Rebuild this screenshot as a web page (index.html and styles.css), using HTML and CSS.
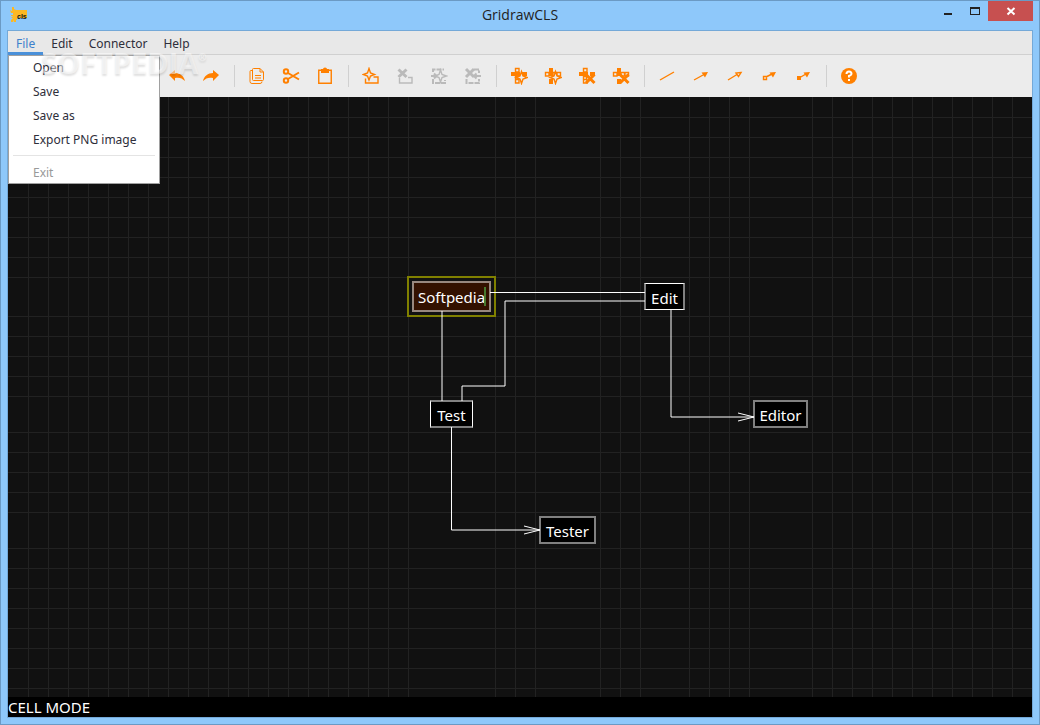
FILE: index.html
```html
<!DOCTYPE html>
<html lang="en">
<head>
<meta charset="utf-8">
<title>GridrawCLS</title>
<link rel="stylesheet" href="styles.css">
</head>
<body>
<div class="window">
  <header class="titlebar">
    <svg class="logo" width="22" height="18" viewBox="0 0 22 18" aria-hidden="true">
      <path fill="#fcb823" d="M2 1h2v2l2 1h11v8H7v2H6v2H4v-2l-1 2H1v-2l2-2H1l2-2H1V9h2V7H1L0 4l2 1z"/>
      <text class="logo-text" x="7" y="13">cls</text>
    </svg>
    <h1 class="title">GridrawCLS</h1>
    <div class="controls">
      <button class="control" aria-label="Minimize"><svg width="12" height="12"><path d="M2 8h8v2H2z" fill="#222"/></svg></button>
      <button class="control" aria-label="Maximize"><svg width="12" height="12"><path fill-rule="evenodd" d="M1 2h10v8H1zM2 4v5h8V4z" fill="#222"/></svg></button>
      <button class="control close" aria-label="Close"><svg width="10" height="10"><path d="M1.500 2l7 6.500M8.500 2l-7 6.500" stroke="#fff" stroke-width="2"/></svg></button>
    </div>
  </header>

  <main class="content">
    <nav class="menubar">
      <div class="menu">
        <button class="menu-title active" aria-expanded="true">File</button>
        <div class="dropdown">
          <button class="item">Open</button>
          <button class="item">Save</button>
          <button class="item">Save as</button>
          <button class="item">Export PNG image</button>
          <hr class="divider">
          <button class="item" disabled>Exit</button>
        </div>
      </div>
      <button class="menu-title">Edit</button>
      <button class="menu-title">Connector</button>
      <button class="menu-title">Help</button>
      <span class="watermark">SOFTPEDIA<span class="mark">®</span></span>
    </nav>

    <div class="toolbar">
      <button class="tool" aria-label="Undo"><svg viewBox="0 0 18 18"><path class="fill" d="M1 8l6-5v3c5 0 9 3 10 8-3-3-6-4-10-3v3z"/></svg></button>
      <button class="tool" aria-label="Redo"><svg viewBox="0 0 18 18"><path class="fill" d="M17 8l-6-5v3C6 6 2 9 1 14c3-3 6-4 10-3v3z"/></svg></button>
      <span class="sep"></span>
      <button class="tool" aria-label="Copy"><svg viewBox="0 0 18 18"><path class="line" d="M6 1.500h6l3.500 3.500v7.500q0 1-1 1h-9q-1 0-1-1v-10q0-1 1-1zM12 1.500V5h3.500M4 3.500H3q-1 0-1 1v10q0 2 2 2h8q2 0 2-2M7 8.500h6M7 11h6"/></svg></button>
      <button class="tool" aria-label="Cut"><svg viewBox="0 0 18 18"><path class="line bold" d="M6 6l11 6.500M6 12l11-6.500"/><circle class="line bold" cx="4" cy="4.500" r="2.200"/><circle class="line bold" cx="4" cy="13.500" r="2.200"/></svg></button>
      <button class="tool" aria-label="Paste"><svg viewBox="0 0 18 18"><path class="line thick" d="M2.750 3.250h12.500v13H2.750z"/><path class="fill" d="M5 2h2q0-1.500 2-1.500T11 2h2v4H5z"/></svg></button>
      <span class="sep"></span>
      <button class="tool" aria-label="Add cell"><svg viewBox="0 0 18 18"><path class="line thick" d="M7 1.500L8.500 6l4 1.500-4 1.500L7 13 5.500 9l-4-1.500 4-1.500z"/><path class="line thick" d="M3.500 11.500v4.500h12.500v-6H11.500"/></svg></button>
      <button class="tool" aria-label="Delete cell" disabled><svg viewBox="0 0 18 18"><path class="line heavy" d="M2.500 2.500l8 7.500M10.500 2.500l-8 7.500"/><path class="line thick" d="M3.500 11v5h12.500v-5.500H12"/></svg></button>
      <button class="tool" aria-label="Add connector" disabled><svg viewBox="0 0 18 18"><path class="line bold dash" d="M3 5V2.500h11M3 12v4h12v-3"/><path class="line bold" d="M1 9h5M4 6.500L6.500 9 4 11.500"/><path class="line thick" d="M10.500 3l1.500 4.500L16.500 9 12 10.500 10.500 15 9 10.500 5 9 9 7.500z"/></svg></button>
      <button class="tool" aria-label="Delete connector" disabled><svg viewBox="0 0 18 18"><path class="line heavy" d="M2 2l8 8M10 2L2 10"/><path class="line bold dash" d="M10 2.500h5V6M2.500 12v4h12.500V12"/><path class="line bold" d="M10 9h7M12.500 6.500L10 9l2.500 2.500"/></svg></button>
      <span class="sep"></span>
      <button class="tool" aria-label="Insert row"><svg viewBox="0 0 18 18"><path class="fill" d="M1 5h5v4H1zM6 5h4v4H6zM12 5h5v4h-5z"/><path class="line thick" d="M5.500 1.500h3.500V5H5.500zM5.500 9.500h3.500V12H5.500zM5.500 12.500h3.500V16H5.500z"/><path class="star" d="M11.500 4.500l1.500 4.500 4.500 1.500-4.500 1.500-1.500 4.500-1.500-4.500-4-1.500 4-1.500z"/></svg></button>
      <button class="tool" aria-label="Insert column"><svg viewBox="0 0 18 18"><path class="fill" d="M5 1h4v4H5zM5 5h4v4H5zM5 12h4v5H5z"/><path class="line thick" d="M1.500 5.500h3.500V9H1.500zM9 5.500h3.500V9H9zM13 5.500h3.500V9H13z"/><path class="star" d="M11.500 4.500l1.500 4.500 4.500 1.500-4.500 1.500-1.500 4.500-1.500-4.500-4-1.500 4-1.500z"/></svg></button>
      <button class="tool" aria-label="Remove row"><svg viewBox="0 0 18 18"><path class="fill" d="M1 5h9v4H1zM12 5h5v4h-5z"/><path class="line thick" d="M5.500 1.500h3.500V5H5.500zM5.500 9.500h3v3h-3zM5.500 12.500h3.500V16H5.500z"/><path class="line heavy" d="M8 7.500l8.500 8.500M16.500 7.500L8 16"/></svg></button>
      <button class="tool" aria-label="Remove column"><svg viewBox="0 0 18 18"><path class="fill" d="M5 1h4v8H5zM5 12h4v5H5z"/><path class="line thick" d="M1.500 5.500h3.500V9H1.500zM9 5.500h3.500V9H9zM13 5.500h3.500V9H13z"/><path class="line heavy" d="M8 7.500l8.500 8.500M16.500 7.500L8 16"/></svg></button>
      <span class="sep"></span>
      <button class="tool" aria-label="Line"><svg viewBox="0 0 18 18"><path class="line thick" d="M2 13L16 5"/></svg></button>
      <button class="tool" aria-label="Arrow"><svg viewBox="0 0 18 18"><path class="line thick" d="M2 13L12 7.500"/><path class="fill" d="M16 5l-6.500 .5 3.500 5z"/></svg></button>
      <button class="tool" aria-label="Open arrow"><svg viewBox="0 0 18 18"><path class="line thick" d="M2 13l9-5.500M15 5.500l-5 .5 2.500 3.500z"/></svg></button>
      <button class="tool" aria-label="Arrow from open square"><svg viewBox="0 0 18 18"><path class="line thick" d="M3.500 9.500h3v3h-3zM6 10l6-3"/><path class="fill" d="M16 5l-6.500 .5 3.500 5z"/></svg></button>
      <button class="tool" aria-label="Arrow from filled square"><svg viewBox="0 0 18 18"><path class="line thick" d="M5 11l7-4"/><path class="fill" d="M3 9h4v4H3zM16 5l-6.500 .5 3.500 5z"/></svg></button>
      <span class="sep"></span>
      <button class="tool" aria-label="Help"><svg viewBox="0 0 18 18"><circle class="fill" cx="9" cy="9" r="8"/><path class="query" d="M6.500 7q0-2.500 2.500-2.500T11.500 7Q11.500 8 9 9v1.500M9 12v2"/></svg></button>
    </div>

    <section class="canvas">
      <svg class="drawing" width="100%" height="100%" aria-hidden="true">
        <path class="grid" d="M20.500 0v600M40.500 0v600M60.500 0v600M80.500 0v600M100.500 0v600M120.500 0v600M140.500 0v600M160.500 0v600M180.500 0v600M200.500 0v600M220.500 0v600M240.500 0v600M260.500 0v600M280.500 0v600M300.500 0v600M320.500 0v600M340.500 0v600M360.500 0v600M380.500 0v600M400.500 0v600M487.500 0v600M507.500 0v600M527.500 0v600M592.500 0v600M612.500 0v600M632.500 0v600M681.500 0v600M701.500 0v600M721.500 0v600M741.500 0v600M804.500 0v600M824.500 0v600M844.500 0v600M864.500 0v600M884.500 0v600M904.500 0v600M924.500 0v600M944.500 0v600M964.500 0v600M984.500 0v600M1004.500 0v600"/>
        <path class="grid" d="M0 20.500h1024M0 40.500h1024M0 60.500h1024M0 80.500h1024M0 100.500h1024M0 120.500h1024M0 140.500h1024M0 160.500h1024M0 180.500h1024M0 219.500h1024M0 239.500h1024M0 259.500h1024M0 279.500h1024M0 299.500h1024M0 335.500h1024M0 355.500h1024M0 375.500h1024M0 395.500h1024M0 415.500h1024M0 451.500h1024M0 471.500h1024M0 491.500h1024M0 511.500h1024M0 531.500h1024M0 551.500h1024M0 571.500h1024M0 591.500h1024"/>
      </svg>
      <div class="selection"><input class="cell-input" type="text" value="Softpedia" aria-label="Cell text"><span class="caret"></span></div>
      <div class="cell edit">Edit</div>
      <div class="cell test">Test</div>
      <div class="cell editor">Editor</div>
      <div class="cell tester">Tester</div>
      <svg class="drawing" width="100%" height="100%" aria-hidden="true">
        <path class="wire" d="M482 195.500H637M637 204H497V289H454V304M434 214V304M443.500 330V433H532M663 213V320H746"/>
        <path class="wire" d="M516 429L532 433L516 437M730 316L746 320L730 324"/>
      </svg>
    </section>
    <footer class="status">CELL MODE</footer>
  </main>
</div>
</body>
</html>
```

FILE: styles.css
```css
* { box-sizing: border-box; }
body { margin: 0; }
button { margin: 0; padding: 0; border: 0; background: none; font: inherit; color: inherit; }

.window {
  display: flex;
  flex-direction: column;
  min-height: 100vh;
  padding: 0 6px 6px;
  border: 1px solid #6b9ac4;
  background: #8ec8fa;
}

.titlebar {
  display: grid;
  grid-template-columns: 1fr auto 1fr;
  height: 29px;
}
.logo { margin: 5px 0 0 3px; }
.logo-text { font: bold 7px "Liberation Sans", sans-serif; fill: #111; }
.title { margin: 0; font: 14px/28px "Open Sans", sans-serif; color: #222; }
.controls { display: flex; justify-content: flex-end; align-items: flex-start; }
.control { display: flex; align-items: center; justify-content: center; width: 27px; height: 20px; }
.close { width: 45px; background: #c75050; }

.content {
  flex: 1;
  display: flex;
  flex-direction: column;
  border: 1px solid #74a9d8;
}

.menubar {
  position: relative;
  display: flex;
  height: 24px;
  border-bottom: 1px solid #d0d0d0;
  background: #e8e8e8;
  color: #2e2e3a;
  font: 12px/24px "Noto Sans", sans-serif;
}
.menu { position: relative; }
.menu-title { height: 24px; padding: 1px 8px 0; }
.active { border-bottom: 3px solid #4a90d9; color: #3e80cc; }
.dropdown {
  position: absolute;
  z-index: 2;
  top: 24px;
  left: 0;
  display: flex;
  flex-direction: column;
  width: 152px;
  border: 1px solid #a0a0a0;
  background: #fff;
}
.item { height: 24px; padding-left: 24px; text-align: left; }
.item:disabled { height: 22px; color: #999; }
.divider { margin: 3px 4px 5px; border: 0; border-top: 1px solid #e4e4e4; align-self: stretch; }

.watermark {
  position: absolute;
  z-index: 3;
  top: 21px;
  left: 33px;
  color: rgba(255, 255, 255, 0.5);
  text-shadow: 0 2px 2px rgba(0, 0, 0, 0.12);
  font: bold 29px/22px "Open Sans", sans-serif;
  pointer-events: none;
}
.mark { font-size: 10px; line-height: 10px; vertical-align: top; }

.toolbar {
  display: flex;
  align-items: center;
  height: 42px;
  padding-left: 152px;
  background: #ececec;
  color: #ff8000;
}
.tool { display: flex; align-items: center; justify-content: center; width: 34px; height: 34px; }
.tool:disabled { color: #bababa; }
.tool svg { width: 18px; height: 18px; }
.sep { display: flex; justify-content: center; width: 12px; height: 22px; }
.sep::before { content: ""; width: 1px; background: #d0d0d0; }
.fill { fill: currentColor; }
.line { fill: none; stroke: currentColor; stroke-width: 1; }
.thick { stroke-width: 1.4; }
.bold { stroke-width: 2; }
.heavy { stroke-width: 3; }
.dash { stroke-dasharray: 5 1; }
.star { fill: #ececec; stroke: currentColor; stroke-width: 1.4; }
.query { fill: none; stroke: #fff; stroke-width: 2; }

.canvas { position: relative; flex: 1; min-height: 600px; background: #111; }
.drawing { position: absolute; inset: 0; pointer-events: none; }
.grid { fill: none; stroke: #222; }
.wire { fill: none; stroke: #fff; }
.cell, .cell-input { color: #fff; font: 15px/24px "Noto Sans", sans-serif; }
.cell {
  position: absolute;
  display: flex;
  align-items: flex-end;
  justify-content: center;
  height: 28px;
  border: 2px solid #808080;
  background: #000;
}
.edit { left: 636px; top: 186px; width: 41px; height: 27px; border-width: 1px 2px; border-color: #fff #808080; }
.test { left: 422px; top: 303px; width: 43px; border-width: 2px 1px; border-color: #808080 #fff; }
.editor { left: 745px; top: 303px; width: 55px; }
.tester { left: 531px; top: 419px; width: 57px; }
.cell { line-height: 22px; }
.selection {
  position: absolute;
  left: 399px;
  top: 179px;
  display: flex;
  width: 89px;
  height: 41px;
  padding: 3px;
  border: 2px solid #808000;
  background: #111;
}
.cell-input {
  width: 100%;
  padding: 0 0 0 4px;
  border: 2px solid #98887f;
  border-radius: 0;
  background: #331100;
}
.caret { position: absolute; right: 8px; top: 9px; width: 2px; height: 19px; background: #477a30; }

.status { background: #000; color: #fff; font: 15px/20px "Noto Sans", sans-serif; }
```
